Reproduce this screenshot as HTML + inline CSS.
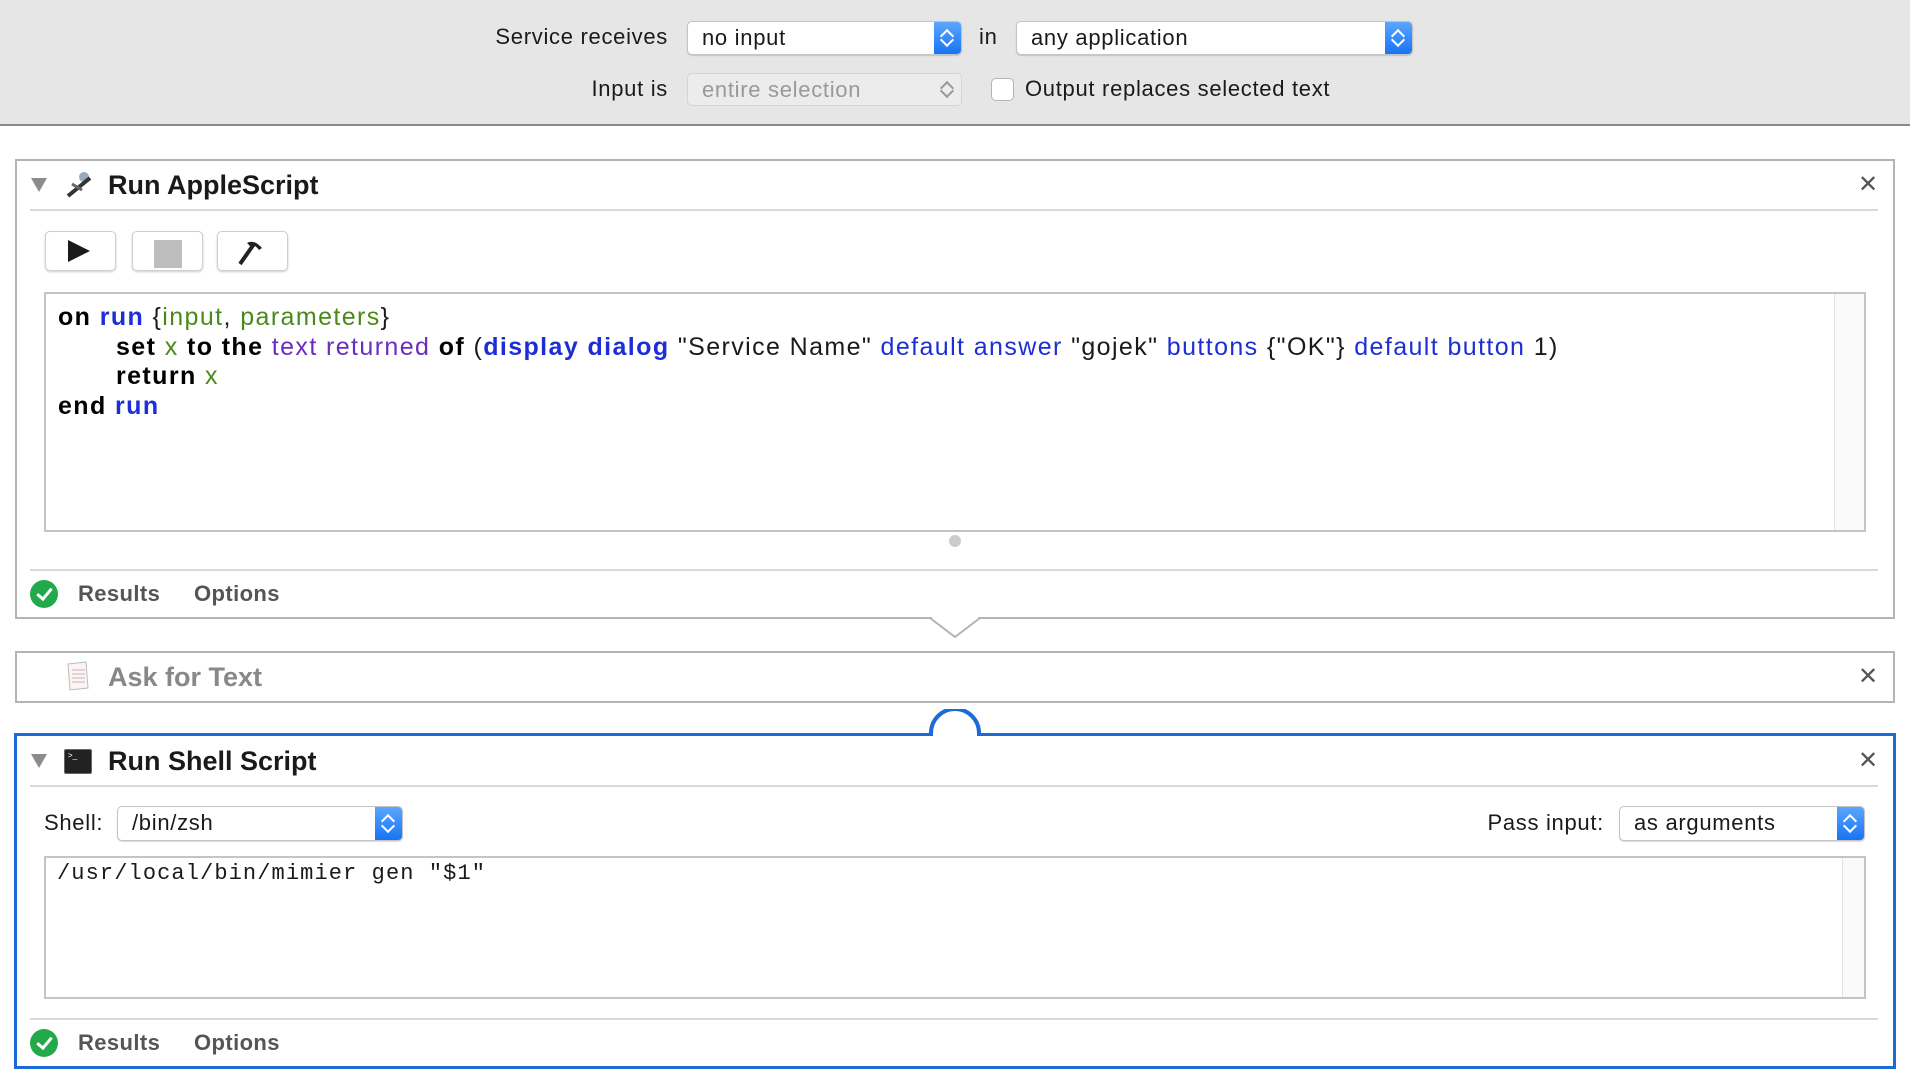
<!DOCTYPE html>
<html><head><meta charset="utf-8"><style>
*{box-sizing:border-box;margin:0;padding:0}
body{width:1910px;height:1092px;background:#fff;position:relative;overflow:hidden;font-family:"Liberation Sans",sans-serif;color:#1a1a1a}
.a{position:absolute;white-space:nowrap}
.top{position:absolute;left:0;top:0;width:1910px;height:126px;background:#e6e6e6;border-bottom:2px solid #8a8a8a}
.lbl{font-size:22px;line-height:26px;letter-spacing:0.7px}
.pop{position:absolute;background:#fff;border:1px solid #c4c4c4;border-radius:5px;box-shadow:0 1px 1px rgba(0,0,0,.15);font-size:22px;line-height:32px;padding-left:14px;overflow:hidden;letter-spacing:0.7px}
.pop .arr{position:absolute;right:0;top:0;bottom:0;width:27px;background:linear-gradient(#5aa6ff,#1874f5);}
.pop .arr:before,.pop .arr:after{content:"";position:absolute;left:8px;width:8px;height:8px;border-left:2px solid #fff;border-top:2px solid #fff}
.pop .arr:before{top:9px;transform:rotate(45deg)}
.pop .arr:after{bottom:9px;transform:rotate(225deg)}
.dis{color:#999;background:#ececec;border-color:#d4d4d4;box-shadow:none}
.dis .arr{background:none}
.dis .arr:before,.dis .arr:after{border-color:#999}
.panel{position:absolute;border:2px solid #b4b4b4;background:#fff}
.title{font-size:27px;font-weight:bold}
.sep{position:absolute;height:2px;background:#d9d9d9}
.tri{position:absolute;width:0;height:0;border-left:8px solid transparent;border-right:8px solid transparent;border-top:14px solid #8c8c8c}
.close{position:absolute;font-size:24px;color:#555}
.btn{position:absolute;top:231px;width:71px;height:40px;border:1px solid #cfcfcf;border-radius:5px;background:#fff;box-shadow:0 1px 2px rgba(0,0,0,.2)}
.box{position:absolute;border:2px solid #c4c4c4;background:#fff}
.code{font-size:25px;line-height:30px;letter-spacing:1.4px}
.k{font-weight:bold;color:#000}.b{color:#1e2ed6;font-weight:bold}.g{color:#4a8a1a}.p{color:#6a2dc2}.bl{color:#1e2ed6}
.chk{position:absolute;width:28px;height:28px;border-radius:50%;background:#22a94a}
.chk:after{content:"";position:absolute;left:10px;top:5px;width:6px;height:12px;border-right:3px solid #fff;border-bottom:3px solid #fff;transform:rotate(40deg)}
.tab{font-size:22px;font-weight:bold;color:#555;letter-spacing:0.4px}
</style></head><body>
<div class="top"></div>
<div class="a lbl" style="right:1242px;top:24px">Service receives</div>
<div class="pop" style="left:687px;top:21px;width:275px;height:34px">no input<div class="arr"></div></div>
<div class="a lbl" style="left:979px;top:24px">in</div>
<div class="pop" style="left:1016px;top:21px;width:397px;height:34px">any application<div class="arr"></div></div>
<div class="a lbl" style="right:1242px;top:76px">Input is</div>
<div class="pop dis" style="left:687px;top:73px;width:275px;height:33px">entire selection<div class="arr"></div></div>
<div class="a" style="left:991px;top:78px;width:23px;height:23px;border:1px solid #b5b5b5;border-radius:5px;background:#fff"></div>
<div class="a lbl" style="left:1025px;top:76px">Output replaces selected text</div>

<div class="panel" style="left:15px;top:159px;width:1880px;height:460px"></div>
<div class="tri" style="left:31px;top:178px"></div>
<svg class="a" style="left:64px;top:170px" width="30" height="30" viewBox="0 0 30 30"><circle cx="20" cy="7" r="5" fill="#9ab"/><path d="M4 26 L26 8" stroke="#333" stroke-width="4"/><path d="M8 14 l10 6" stroke="#666" stroke-width="3"/></svg>
<div class="a title" style="left:108px;top:170px">Run AppleScript</div>
<div class="close" style="left:1858px;top:170px">✕</div>
<div class="sep" style="left:30px;top:209px;width:1848px"></div>
<div class="btn" style="left:45px"><div class="a" style="left:22px;top:8px;border-left:22px solid #1a1a1a;border-top:11px solid transparent;border-bottom:11px solid transparent"></div></div>
<div class="btn" style="left:132px"><div class="a" style="left:21px;top:8px;width:28px;height:28px;background:#bdbdbd"></div></div>
<div class="btn" style="left:217px"><svg class="a" style="left:18px;top:6px" width="34" height="28" viewBox="0 0 34 28"><path d="M4 26 L18 6" stroke="#222" stroke-width="4"/><path d="M11 5 Q18 1 26 10 L23 12 Q19 6 14 8 Z" fill="#222"/></svg></div>
<div class="box" style="left:44px;top:292px;width:1822px;height:240px"><div class="a" style="right:0;top:0;bottom:0;width:30px;border-left:1px solid #e2e2e2;background:#fafafa"></div></div>
<div class="a code" style="left:58px;top:302px"><span class="k">on</span> <span class="b">run</span> {<span class="g">input</span>, <span class="g">parameters</span>}</div>
<div class="a code" style="left:116px;top:332px"><span class="k">set</span> <span class="g">x</span> <span class="k">to the</span> <span class="p">text returned</span> <span class="k">of</span> (<span class="b">display dialog</span> "Service Name" <span class="bl">default answer</span> "gojek" <span class="bl">buttons</span> {"OK"} <span class="bl">default button</span> 1)</div>
<div class="a code" style="left:116px;top:361px"><span class="k">return</span> <span class="g">x</span></div>
<div class="a code" style="left:58px;top:391px"><span class="k">end</span> <span class="b">run</span></div>
<div class="a" style="left:949px;top:535px;width:12px;height:12px;border-radius:50%;background:#ccc"></div>
<div class="sep" style="left:30px;top:569px;width:1848px"></div>
<div class="chk" style="left:30px;top:580px"></div>
<div class="a tab" style="left:78px;top:581px">Results</div>
<div class="a tab" style="left:194px;top:581px">Options</div>
<svg class="a" style="left:928px;top:616px" width="54" height="24"><path d="M2 2 L27 21 L52 2" fill="#fff" stroke="#b4b4b4" stroke-width="2"/><rect x="4" y="0" width="46" height="2" fill="#fff"/></svg>

<div class="panel" style="left:15px;top:651px;width:1880px;height:52px"></div>
<svg class="a" style="left:64px;top:660px" width="28" height="32"><path d="M4 4 L22 2 L24 28 L6 30 Z" fill="#f6f6f6" stroke="#bbb"/><path d="M8 10 h13 M8 14 h13 M8 18 h13 M8 22 h13" stroke="#e3a9a9"/></svg>
<div class="a title" style="left:108px;top:662px;color:#888">Ask for Text</div>
<div class="close" style="left:1858px;top:662px">✕</div>

<div class="panel" style="left:14px;top:733px;width:1882px;height:336px;border:3px solid #1c6ad6"></div>
<svg class="a" style="left:928px;top:709px" width="54" height="30"><path d="M3 27 L3 24 A24 24 0 0 1 51 24 L51 27" fill="#fff" stroke="#1c6ad6" stroke-width="4"/><rect x="5" y="24" width="44" height="8" fill="#fff"/></svg>
<div class="tri" style="left:31px;top:754px"></div>
<div class="a" style="left:64px;top:749px;width:28px;height:25px;background:#222;border:1px solid #666;border-radius:2px;color:#fff;font-size:8px;padding:1px 3px">&gt;_</div>
<div class="a title" style="left:108px;top:746px">Run Shell Script</div>
<div class="close" style="left:1858px;top:746px">✕</div>
<div class="sep" style="left:30px;top:785px;width:1848px"></div>
<div class="a lbl" style="left:44px;top:810px">Shell:</div>
<div class="pop" style="left:117px;top:806px;width:286px;height:35px">/bin/zsh<div class="arr"></div></div>
<div class="a lbl" style="right:306px;top:810px">Pass input:</div>
<div class="pop" style="left:1619px;top:806px;width:246px;height:35px">as arguments<div class="arr"></div></div>
<div class="box" style="left:44px;top:856px;width:1822px;height:143px"><div class="a" style="right:0;top:0;bottom:0;width:22px;border-left:1px solid #e2e2e2;background:#fafafa"></div></div>
<div class="a" style="left:57px;top:860px;font-family:'Liberation Mono',monospace;font-size:22px;line-height:28px;letter-spacing:1.1px">/usr/local/bin/mimier gen "$1"</div>
<div class="sep" style="left:30px;top:1018px;width:1848px"></div>
<div class="chk" style="left:30px;top:1029px"></div>
<div class="a tab" style="left:78px;top:1030px">Results</div>
<div class="a tab" style="left:194px;top:1030px">Options</div>
</body></html>
